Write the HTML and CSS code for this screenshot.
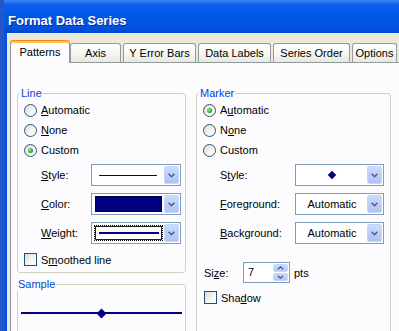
FILE: index.html
```html
<!DOCTYPE html>
<html lang="en">
<head>
    <meta charset="UTF-8">
    <title>Format Data Series</title>
    <link rel="stylesheet" href="styles.css">
</head>
<body>
    <div class="window">
        <!-- Title bar -->
        <div class="titlebar">Format Data Series</div>

        <div class="client">
            <!-- Tabs -->
            <div class="tabs">
                <div class="tab tab-patterns active">Patterns</div>
                <div class="tab tab-axis">Axis</div>
                <div class="tab tab-yerr">Y Error Bars</div>
                <div class="tab tab-labels">Data Labels</div>
                <div class="tab tab-order">Series Order</div>
                <div class="tab tab-options">Options</div>
            </div>

            <!-- Patterns page -->
            <div class="panel">
                <div class="col-left">
                    <fieldset class="group group-line">
                        <legend>Line</legend>
                        <div class="opt"><span class="radio"></span><span><u>A</u>utomatic</span></div>
                        <div class="opt"><span class="radio"></span><span><u>N</u>one</span></div>
                        <div class="opt"><span class="radio on"></span><span>Custom</span></div>

                        <div class="field first">
                            <span class="field-label"><u>S</u>tyle:</span>
                            <div class="combo">
                                <div class="combo-value"><span class="style-line"></span></div>
                                <div class="combo-btn"><svg width="7" height="5" viewBox="0 0 7 5"><path d="M0.6 0.8 L3.5 3.7 L6.4 0.8" fill="none" stroke="#4d6185" stroke-width="1.6"/></svg></div>
                            </div>
                        </div>
                        <div class="field">
                            <span class="field-label"><u>C</u>olor:</span>
                            <div class="combo">
                                <div class="combo-value"><span class="color-fill"></span></div>
                                <div class="combo-btn"><svg width="7" height="5" viewBox="0 0 7 5"><path d="M0.6 0.8 L3.5 3.7 L6.4 0.8" fill="none" stroke="#4d6185" stroke-width="1.6"/></svg></div>
                            </div>
                        </div>
                        <div class="field">
                            <span class="field-label"><u>W</u>eight:</span>
                            <div class="combo">
                                <div class="combo-value"><span class="focus-box"><span class="weight-line"></span></span></div>
                                <div class="combo-btn"><svg width="7" height="5" viewBox="0 0 7 5"><path d="M0.6 0.8 L3.5 3.7 L6.4 0.8" fill="none" stroke="#4d6185" stroke-width="1.6"/></svg></div>
                            </div>
                        </div>

                        <div class="check-row"><span class="check"></span><span>S<u>m</u>oothed line</span></div>
                    </fieldset>

                    <fieldset class="group group-sample">
                        <legend>Sample</legend>
                        <div class="sample-line">
                            <span class="seg"></span>
                            <span class="diamond"></span>
                            <span class="seg"></span>
                        </div>
                    </fieldset>
                </div>

                <fieldset class="group group-marker">
                    <legend>Marker</legend>
                    <div class="opt"><span class="radio on"></span><span>A<u>u</u>tomatic</span></div>
                    <div class="opt"><span class="radio"></span><span>N<u>o</u>ne</span></div>
                    <div class="opt"><span class="radio"></span><span>Custom</span></div>

                    <div class="field first">
                        <span class="field-label wide">S<u>t</u>yle:</span>
                        <div class="combo narrow">
                            <div class="combo-value center"><span class="marker-diamond"></span></div>
                            <div class="combo-btn"><svg width="7" height="5" viewBox="0 0 7 5"><path d="M0.6 0.8 L3.5 3.7 L6.4 0.8" fill="none" stroke="#4d6185" stroke-width="1.6"/></svg></div>
                        </div>
                    </div>
                    <div class="field">
                        <span class="field-label wide"><u>F</u>oreground:</span>
                        <div class="combo narrow">
                            <div class="combo-value center">Automatic</div>
                            <div class="combo-btn"><svg width="7" height="5" viewBox="0 0 7 5"><path d="M0.6 0.8 L3.5 3.7 L6.4 0.8" fill="none" stroke="#4d6185" stroke-width="1.6"/></svg></div>
                        </div>
                    </div>
                    <div class="field">
                        <span class="field-label wide"><u>B</u>ackground:</span>
                        <div class="combo narrow">
                            <div class="combo-value center">Automatic</div>
                            <div class="combo-btn"><svg width="7" height="5" viewBox="0 0 7 5"><path d="M0.6 0.8 L3.5 3.7 L6.4 0.8" fill="none" stroke="#4d6185" stroke-width="1.6"/></svg></div>
                        </div>
                    </div>

                    <div class="size-row">
                        <span class="size-label">Si<u>z</u>e:</span>
                        <div class="spin">
                            <span class="spin-value">7</span>
                            <div class="spin-btns">
                                <span class="spin-btn"><svg width="7" height="4" viewBox="0 0 7 4"><path d="M0.8 3.3 L3.5 0.8 L6.2 3.3" fill="none" stroke="#4d6185" stroke-width="1.4"/></svg></span>
                                <span class="spin-btn"><svg width="7" height="4" viewBox="0 0 7 4"><path d="M0.8 0.7 L3.5 3.2 L6.2 0.7" fill="none" stroke="#4d6185" stroke-width="1.4"/></svg></span>
                            </div>
                        </div>
                        <span class="pts">pts</span>
                    </div>

                    <div class="check-row shadow-row"><span class="check"></span><span>Sha<u>d</u>ow</span></div>
                </fieldset>
            </div>
        </div>
    </div>
</body>
</html>
```

FILE: styles.css
```css
/* Windows XP style dialog */
* {
    box-sizing: border-box;
}

body {
    margin: 0;
    background: #2356c9;
    font-family: "Liberation Sans", Arial, sans-serif;
    font-size: 11px;
    color: #000;
    overflow: hidden;
}

.window {
    margin-left: 4px;
}

/* Title bar */
.titlebar {
    height: 33px;
    padding: 8px 0 0 4px;
    line-height: 25px;
    font-size: 13px;
    font-weight: bold;
    color: #fff;
    text-shadow: 1px 1px 0 #0c2a8c;
    background: linear-gradient(#3a87f6 0, #0d60ea 5px, #0058e6 45%, #0054e2 80%, #0048d0 100%);
}

.client {
    height: 298px;
    overflow: hidden;
    background: #ece9d8;
    border-left: 3px solid #0751dc;
    padding: 7px 0 0 3px;
}

/* Tabs */
.tabs {
    display: flex;
    align-items: flex-end;
    height: 23px;
    margin-bottom: -1px;
    position: relative;
    z-index: 2;
}

.tab {
    flex: none;
    height: 19px;
    margin: 0 2px 1px 0;
    border: 1px solid #919b9c;
    border-bottom: none;
    border-radius: 3px 3px 0 0;
    background: linear-gradient(#ffffff, #f6f6f2 55%, #e8e7e0);
    text-align: center;
    line-height: 18px;
}

.tab.active {
    height: 23px;
    margin: 0;
    padding-top: 2px;
    border-top: 1px solid #e68b2c;
    box-shadow: inset 0 2px 0 #ffc83c;
    background: #fcfcfe;
}

.tab-patterns { width: 60px; }
.tab-axis { width: 51px; }
.tab-yerr { width: 73px; }
.tab-labels { width: 73px; }
.tab-order { width: 77px; }
.tab-options { width: 45px; }

/* Page (continues past the right edge of the shot) */
.panel {
    position: relative;
    z-index: 1;
    height: 300px;
    background: #fcfcfe;
    border: 1px solid #919b9c;
    border-right: 0;
    padding: 24px 0 0 6px;
    display: flex;
    align-items: flex-start;
    gap: 10px;
}

.col-left {
    width: 169px;
    display: flex;
    flex-direction: column;
    gap: 5px;
}

.group {
    margin: 0;
    min-width: 0;
    padding: 0 6px 3px;
    border: 1px solid #d0d0bf;
    border-radius: 3px;
}

.group legend {
    color: #0046d5;
    padding: 0 1px;
    margin-left: -4px;
    line-height: 13px;
}

.group-marker {
    width: 195px;
    min-height: 260px;
}

.group-sample {
    padding: 0 3px;
    min-height: 60px;
}

/* Radio buttons and check boxes */
.opt {
    display: flex;
    align-items: center;
    gap: 4px;
    height: 20px;
}

.radio,
.check {
    flex: none;
    width: 13px;
    height: 13px;
    border: 1px solid #2c5579;
    background: linear-gradient(135deg, #dcdcd5, #f6f6f3 60%, #ffffff);
    display: flex;
    align-items: center;
    justify-content: center;
}

.radio {
    border-radius: 50%;
}

.check {
    border-color: #1c5180;
}

.radio.on::after {
    content: "";
    width: 5px;
    height: 5px;
    border-radius: 50%;
    background: radial-gradient(circle at 35% 35%, #8ee88e, #21a121 70%);
}

.check-row {
    display: flex;
    align-items: center;
    gap: 4px;
    height: 19px;
    margin-top: 6px;
}

/* Label + combo rows */
.field {
    display: flex;
    align-items: center;
    height: 22px;
    margin-top: 7px;
    padding-left: 17px;
}

.field.first {
    margin-top: 4px;
}

.field-label {
    width: 50px;
    flex: none;
}

.field-label.wide {
    width: 75px;
}

.combo {
    flex: none;
    width: 90px;
    height: 22px;
    border: 1px solid #7f9db9;
    background: #fff;
    padding: 1px;
    display: flex;
}

.combo.narrow {
    width: 89px;
}

.combo-value {
    flex: 1;
    display: flex;
    align-items: center;
    min-width: 0;
}

.combo-value.center {
    justify-content: center;
}

.combo-btn {
    flex: none;
    width: 15px;
    border: 1px solid #c6d5fb;
    border-radius: 2px;
    background: linear-gradient(#cddcfd, #b8cbf7 60%, #aec4f4);
    display: flex;
    align-items: center;
    justify-content: center;
}

.style-line {
    flex: 1;
    height: 1px;
    margin: 0 7px 0 6px;
    background: #000080;
}

.color-fill {
    flex: 1;
    align-self: stretch;
    margin: 1px 2px 1px 2px;
    background: #000080;
    border: 1px solid #000050;
}

.focus-box {
    flex: 1;
    align-self: stretch;
    margin: 1px 1px 1px 1px;
    border: 1px dotted #000;
    box-shadow: inset 0 0 0 1px #222;
    display: flex;
    align-items: center;
    padding: 0 3px 0 4px;
}

.weight-line {
    flex: 1;
    height: 2px;
    background: #000080;
}

.marker-diamond {
    width: 6px;
    height: 6px;
    background: #000080;
    transform: rotate(45deg);
}

/* Size spinner */
.size-row {
    display: flex;
    align-items: center;
    height: 21px;
    margin-top: 18px;
    padding-left: 1px;
}

.size-label {
    width: 39px;
    flex: none;
}

.spin {
    flex: none;
    width: 47px;
    height: 21px;
    border: 1px solid #7f9db9;
    background: #fff;
    padding: 1px;
    display: flex;
}

.spin-value {
    flex: 1;
    padding-left: 3px;
    line-height: 17px;
}

.spin-btns {
    width: 15px;
    display: flex;
    flex-direction: column;
    gap: 1px;
}

.spin-btn {
    flex: 1;
    border: 1px solid #c6d5fb;
    border-radius: 2px;
    background: linear-gradient(#cddcfd, #b2c7f5);
    display: flex;
    align-items: center;
    justify-content: center;
}

.pts {
    margin-left: 4px;
}

.shadow-row {
    margin-top: 5px;
    padding-left: 1px;
}

/* Sample */
.sample-line {
    display: flex;
    align-items: center;
    height: 10px;
    margin-top: 17px;
}

.seg {
    flex: 1;
    height: 2px;
    background: #000080;
}

.diamond {
    width: 7px;
    height: 7px;
    margin: 0 -1px;
    background: #000080;
    transform: rotate(45deg);
}

u {
    text-decoration-thickness: 1px;
}
```
